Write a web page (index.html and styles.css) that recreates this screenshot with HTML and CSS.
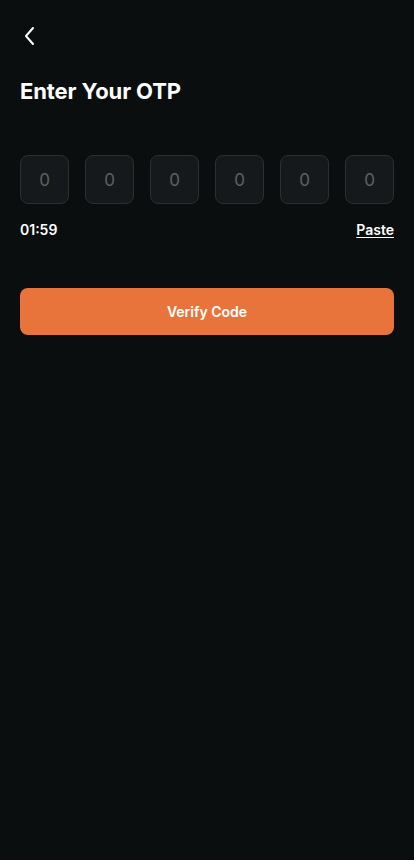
FILE: index.html
```html
<!DOCTYPE html>
<html>
<head>
<meta charset="utf-8">
<link rel="stylesheet" href="styles.css">
</head>
<body>
<div class="screen">
  <div class="topbar">
    <svg class="back" width="12" height="20" viewBox="0 0 12 20"><path d="M10 2 L3 10 L10 18" fill="none" stroke="#ffffff" stroke-width="2" stroke-linecap="round" stroke-linejoin="round"/></svg>
  </div>
  <h1 class="title">Enter Your OTP</h1>
  <div class="otp">
    <div class="box">0</div>
    <div class="box">0</div>
    <div class="box">0</div>
    <div class="box">0</div>
    <div class="box">0</div>
    <div class="box">0</div>
  </div>
  <div class="meta">
    <span class="timer">01:59</span>
    <span class="paste">Paste</span>
  </div>
  <button class="verify">Verify Code</button>
</div>
</body>
</html>
```
FILE: styles.css
```css
html, body {
  margin: 0;
  padding: 0;
  background: #0b0e0f;
}
body {
  font-family: Inter, "Noto Sans", sans-serif;
  color: #ffffff;
}
.screen {
  width: 414px;
  height: 860px;
  padding: 0 20px;
  box-sizing: border-box;
}
.topbar {
  height: 73px;
  padding-top: 26px;
  box-sizing: border-box;
  padding-left: 3px;
}
.back {
  display: block;
}
.title {
  margin: 0;
  font-size: 22px;
  font-weight: 700;
  line-height: 36px;
  letter-spacing: -0.1px;
}
.otp {
  margin-top: 46px;
  display: flex;
  justify-content: space-between;
}
.box {
  width: 49px;
  height: 49px;
  box-sizing: border-box;
  border: 1px solid #2b2f31;
  border-radius: 8px;
  background: #16191b;
  color: #5d6163;
  font-size: 17px;
  display: flex;
  align-items: center;
  justify-content: center;
}
.meta {
  margin-top: 16px;
  display: flex;
  justify-content: space-between;
  align-items: center;
  font-size: 14px;
  font-weight: 600;
  line-height: 20px;
}
.paste {
  text-decoration: underline;
  text-underline-offset: 2px;
}
.verify {
  margin-top: 48px;
  width: 100%;
  height: 47px;
  border: none;
  border-radius: 8px;
  background: #e8743b;
  color: #ffffff;
  font-family: Inter, "Noto Sans", sans-serif;
  font-size: 14px;
  font-weight: 600;
  display: block;
}
```
